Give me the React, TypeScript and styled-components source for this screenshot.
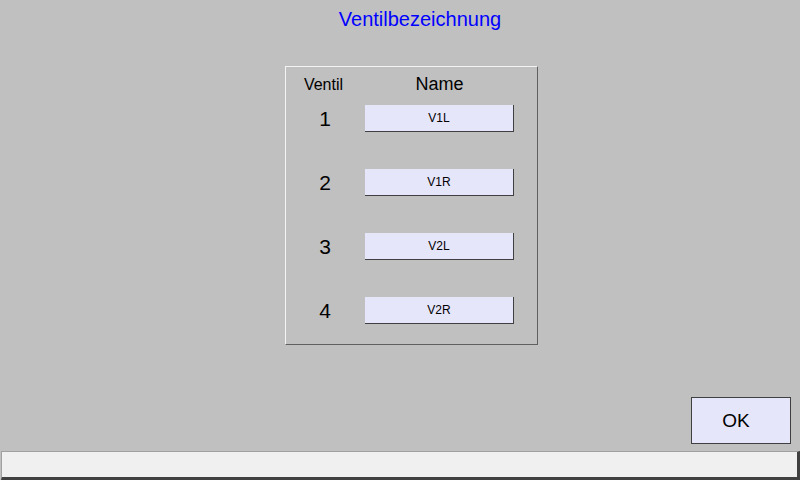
import React from 'react';
import styled, { createGlobalStyle } from 'styled-components';

const GlobalStyle = createGlobalStyle`
  html, body {
    margin: 0;
    padding: 0;
    background: #c0c0c0;
  }
`;

const Screen = styled.div`
  width: 800px;
  height: 480px;
  background: #c0c0c0;
  font-family: 'Liberation Sans', Arial, sans-serif;
  color: #000;
  display: flex;
  flex-direction: column;
  overflow: hidden;
`;

const Title = styled.h1`
  margin: 8px 0 0 40px;
  height: 22px;
  line-height: 22px;
  font-size: 20px;
  font-weight: normal;
  color: #0000ff;
  text-align: center;
`;

const Panel = styled.div`
  margin: 36px 0 0 285px;
  width: 251px;
  padding-bottom: 20px;
  border-top: 1px solid #f4f4f4;
  border-left: 1px solid #f4f4f4;
  border-right: 1px solid #606060;
  border-bottom: 1px solid #606060;
  display: flex;
  flex-direction: column;
  gap: 37px;
`;

const HeaderRow = styled.div`
  height: 35px;
  padding-bottom: 3px;
  margin-bottom: -37px;
  display: grid;
  grid-template-columns: 79px 149px;
  align-items: center;
  text-align: center;
`;

const HeaderLabel = styled.span<{ $size: number; $shift?: number }>`
  font-size: ${({ $size }) => $size}px;
  margin-left: ${({ $shift = 0 }) => $shift}px;
`;

const Row = styled.div`
  display: grid;
  grid-template-columns: 79px 149px;
  align-items: center;
  height: 27px;
`;

const Number = styled.span`
  text-align: center;
  font-size: 21px;
  margin-left: -1px;
`;

const NameField = styled.div`
  box-sizing: border-box;
  height: 27px;
  background: #e6e6fa;
  border-right: 1px solid #404040;
  border-bottom: 1px solid #404040;
  display: flex;
  align-items: center;
  justify-content: center;
  font-size: 12px;
`;

const Spacer = styled.div`
  flex: 1;
`;

const ButtonRow = styled.div`
  display: flex;
  justify-content: flex-end;
  padding-right: 9px;
  margin-bottom: 7px;
`;

const OkButton = styled.button`
  box-sizing: border-box;
  width: 100px;
  height: 47px;
  background: #e6e6fa;
  border: 1px solid #404040;
  font-family: 'Liberation Sans', Arial, sans-serif;
  font-size: 19px;
  color: #000;
  padding: 0 10px 0 0;
`;

const StatusBar = styled.div`
  box-sizing: border-box;
  margin-left: 1px;
  height: 29px;
  background: #f0f0f0;
  border-top: 1px solid #a0a0a0;
  border-left: 1px solid #a0a0a0;
  border-right: 3px solid #404040;
  border-bottom: 3px solid #404040;
`;

const valves = [
  { nr: 1, name: 'V1L' },
  { nr: 2, name: 'V1R' },
  { nr: 3, name: 'V2L' },
  { nr: 4, name: 'V2R' },
];

const App = () => {
  return (
    <React.Fragment>
      <GlobalStyle />
      <Screen>
        <Title>Ventilbezeichnung</Title>
        <Panel>
          <HeaderRow>
            <HeaderLabel $size={16} $shift={-4}>Ventil</HeaderLabel>
            <HeaderLabel $size={18}>Name</HeaderLabel>
          </HeaderRow>
          {valves.map((v) => (
            <Row key={v.nr}>
              <Number>{v.nr}</Number>
              <NameField>{v.name}</NameField>
            </Row>
          ))}
        </Panel>
        <Spacer />
        <ButtonRow>
          <OkButton>OK</OkButton>
        </ButtonRow>
        <StatusBar />
      </Screen>
    </React.Fragment>
  );
};

export default App;
